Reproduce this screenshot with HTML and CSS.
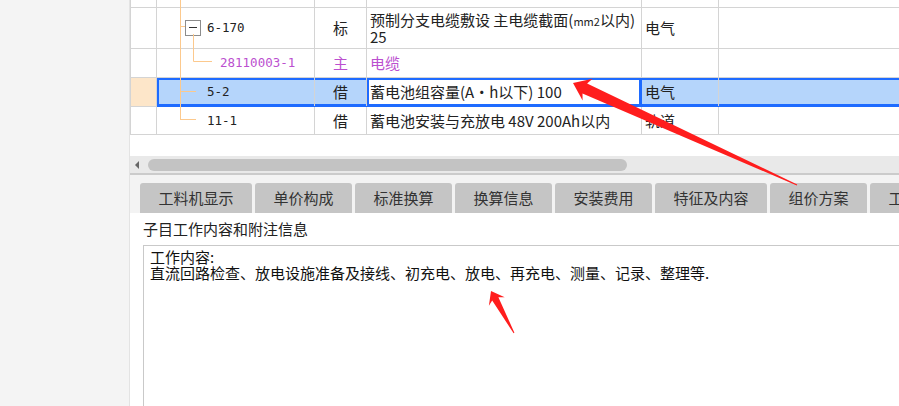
FILE: index.html
```html
<!DOCTYPE html>
<html>
<head>
    <title>子目工作内容</title>
    <meta charset="UTF-8">
    <link rel="stylesheet" href="styles.css">
</head>
<body>
    <div class="app">
        <aside class="side"></aside>

        <main class="main">
            <!-- 定额子目表格 -->
            <div class="grid">
                <table class="quota">
                    <colgroup>
                        <col class="c-head"><col class="c-code"><col class="c-type"><col class="c-desc"><col class="c-spec"><col class="c-rest">
                    </colgroup>
                    <tr class="r-cut">
                        <td></td><td></td><td></td><td></td><td></td><td></td>
                    </tr>
                    <tr class="r-tall">
                        <td></td>
                        <td class="code lv0"><span class="fold"></span>6-170</td>
                        <td class="type">标</td>
                        <td class="desc">预制分支电缆敷设 主电缆截面(<span class="small">mm2</span>以内)<br>25</td>
                        <td class="spec">电气</td>
                        <td></td>
                    </tr>
                    <tr class="row main-mat">
                        <td></td>
                        <td class="code lv2">28110003-1</td>
                        <td class="type">主</td>
                        <td class="desc">电缆</td>
                        <td class="spec"></td>
                        <td></td>
                    </tr>
                    <tr class="row sel">
                        <td class="head"></td>
                        <td class="code lv1 first">5-2</td>
                        <td class="type">借</td>
                        <td class="desc active">蓄电池组容量(A·h以下) 100</td>
                        <td class="spec">电气</td>
                        <td></td>
                    </tr>
                    <tr class="row r-last">
                        <td></td>
                        <td class="code lv1">11-1</td>
                        <td class="type">借</td>
                        <td class="desc">蓄电池安装与充放电 48V 200Ah以内</td>
                        <td class="spec">轨道</td>
                        <td></td>
                    </tr>
                </table>

                <svg class="tree" width="160" height="156">
                    <g stroke="#fcc98d" stroke-width="1" fill="none">
                        <path d="M50.5 0 V119.5"/>
                        <path d="M50 26.5 H55"/>
                        <path d="M63.5 34 V61.5 H82"/>
                        <path d="M50 91.5 H66"/>
                        <path d="M50 119.5 H66"/>
                    </g>
                </svg>
            </div>

            <div class="hscroll">
                <span class="scroll-left"></span>
                <span class="thumb"></span>
            </div>

            <div class="tabs">
                <div class="tab">工料机显示</div>
                <div class="tab">单价构成</div>
                <div class="tab">标准换算</div>
                <div class="tab">换算信息</div>
                <div class="tab">安装费用</div>
                <div class="tab">特征及内容</div>
                <div class="tab">组价方案</div>
                <div class="tab">工程量明细</div>
            </div>

            <div class="detail">
                <div class="detail-title">子目工作内容和附注信息</div>
                <div class="memo">工作内容:<br>直流回路检查、放电设施准备及接线、初充电、放电、再充电、测量、记录、整理等.</div>
            </div>
        </main>
    </div>

    <!-- 截图标注箭头 -->
    <svg class="marks" width="899" height="406">
        <g fill="#ff1d1d">
            <polygon points="573,83 592.6,78.7 587.1,83.4 797.2,184.5 796.8,185.5 582.5,93.4 582.6,100.5"/>
            <polygon points="491,291 504.7,297.2 498.4,297.2 514.4,332.8 513.6,333.2 492.2,300.6 488.9,305.8"/>
        </g>
    </svg>
</body>
</html>
```

FILE: styles.css
```css
body {
    margin: 0;
    width: 899px;
    height: 406px;
    overflow: hidden;
    position: relative;
    background: #fff;
    font-family: "Noto Sans CJK SC", sans-serif;
    color: #222;
}
.app {
    display: flex;
    height: 406px;
}
.side {
    flex: none;
    width: 130px;
    box-sizing: border-box;
    background: #f4f4f4;
    border-right: 1px solid #e3e3e3;
}
.main {
    flex: 1;
    min-width: 0;
    display: flex;
    flex-direction: column;
    overflow: hidden;
}

/* 表格 */
.grid {
    flex: none;
    height: 156px;
    position: relative;
    overflow: hidden;
    background: #fff;
}
.quota {
    border-collapse: collapse;
    table-layout: fixed;
    width: 900px;
    margin-top: -22px;
    font-size: 15px;
    line-height: 16px;
    color: #222;
}
.c-head { width: 26px; }
.c-code { width: 158px; }
.c-type { width: 52px; }
.c-desc { width: 275px; }
.c-spec { width: 77px; }
.c-rest { width: 312px; }
.quota td {
    border: 1px solid #d4d4d4;
    padding: 0 3px;
    vertical-align: middle;
    white-space: nowrap;
    overflow: hidden;
}
.r-cut { height: 29px; }
.r-tall { height: 41px; }
.row { height: 29px; }
.r-last { height: 28px; }
.code {
    font-family: "DejaVu Sans Mono", monospace;
    font-size: 12.5px;
}
.lv0 { padding-left: 28px !important; }
.lv1 { padding-left: 50px !important; }
.lv2 { padding-left: 63px !important; }
.fold {
    display: inline-block;
    width: 14px;
    height: 14px;
    border: 1px solid #8c8c8c;
    background: #fff;
    vertical-align: middle;
    margin: -2px 6px 0 0;
}
.fold::after {
    content: "";
    display: block;
    width: 8px;
    height: 1px;
    margin: 6px 3px 0;
    background: #333;
}
.type { text-align: center; }
.small { font-size: 11px; }
.main-mat td { color: #bb4fcf; }

/* 当前选中行 */
.sel td {
    background: #b5d5fb;
    border-top-color: #1e6bff;
    border-bottom-color: #1e6bff;
    box-shadow: inset 0 2px #1e6bff, inset 0 -2px #1e6bff;
}
.sel td.head {
    background: #fde6c9;
    border-top-color: #d4d4d4;
    border-bottom-color: #d4d4d4;
    box-shadow: none;
}
.sel td.first {
    border-left-color: #1e6bff;
    box-shadow: inset 2px 0 #1e6bff, inset 0 2px #1e6bff, inset 0 -2px #1e6bff;
}
.sel td.active {
    background: #fff;
    border-left-color: #1e6bff;
    border-right-color: #1e6bff;
    box-shadow: inset 0 0 0 2px #1e6bff;
}
.tree {
    position: absolute;
    left: 0;
    top: 0;
    pointer-events: none;
}

/* 横向滚动条 */
.hscroll {
    flex: none;
    height: 17px;
    background: #e9e9e9;
    border-bottom: 2px solid #cbcbcb;
    display: flex;
    align-items: center;
    padding-left: 5px;
}
.scroll-left {
    width: 0;
    height: 0;
    border-right: 4px solid #676767;
    border-top: 4px solid transparent;
    border-bottom: 4px solid transparent;
}
.thumb {
    margin-left: 9px;
    width: 479px;
    height: 12px;
    border-radius: 6px;
    background: #c3c3c3;
}

/* 页签 */
.tabs {
    flex: none;
    height: 38px;
    box-sizing: border-box;
    padding: 8px 0 0 10px;
    background: #f3f3f3;
    display: flex;
    gap: 3px;
    overflow: hidden;
    white-space: nowrap;
}
.tab {
    flex: none;
    height: 30px;
    padding: 0 18.5px;
    background: #c5c5c5;
    border-radius: 3px 3px 0 0;
    font-size: 15px;
    line-height: 30px;
    color: #333;
}

/* 工作内容 */
.detail {
    flex: 1;
    padding: 6px 0 0 13px;
    background: #fff;
}
.detail-title {
    font-size: 15px;
    line-height: 20px;
    color: #222;
}
.memo {
    margin-top: 6px;
    height: 200px;
    border: 1px solid #c9c9c9;
    border-right: none;
    padding: 3px 6px;
    font-size: 15px;
    line-height: 16px;
    color: #111;
    white-space: nowrap;
}

.marks {
    position: absolute;
    left: 0;
    top: 0;
    pointer-events: none;
}
```
